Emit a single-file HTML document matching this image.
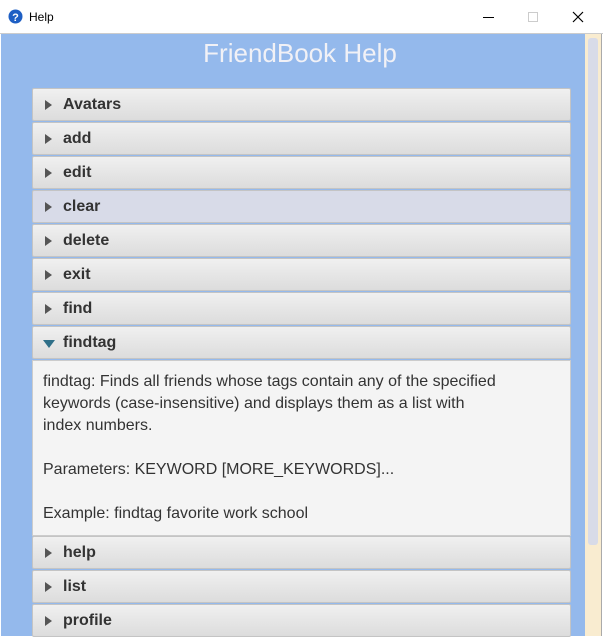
<!DOCTYPE html>
<html><head><style>
*{margin:0;padding:0;box-sizing:border-box}
body{width:603px;height:636px;overflow:hidden;background:#fff;font-family:"Liberation Sans",sans-serif;position:relative}
.tb{position:absolute;left:0;top:0;width:603px;height:34px;background:#fff;border-bottom:1px solid #ccc}
.tb .t{position:absolute;left:29px;top:10px;font-size:12px;color:#000}
.main{position:absolute;left:1px;top:34px;width:584px;height:602px;background:#94b9ec}
.sb{position:absolute;left:585px;top:34px;width:17px;height:602px;background:#f9ecd0;border-right:1px solid #aaa}
.thumb{position:absolute;left:588px;top:38px;width:10px;height:507px;background:#d8dbe8;border-radius:3px}
h1{position:absolute;left:0;width:600px;top:38px;text-align:center;font-weight:normal;font-size:26px;color:#f1f1f6}
.h{position:absolute;left:32px;width:539px;height:33px;background:linear-gradient(#f0f0f0,#dcdcdc);border:1px solid #c4c4c4;border-radius:2px;font-size:16px;font-weight:bold;color:#333;padding:7px 0 0 30px}
.h:before{content:"";position:absolute;left:12px;top:11px;border-left:7px solid #555;border-top:5px solid transparent;border-bottom:5px solid transparent}
.h.o:before{left:10px;top:13px;border-top:8px solid #2f6f88;border-left:6px solid transparent;border-right:6px solid transparent;border-bottom:0}
.c{position:absolute;left:32px;top:360px;width:539px;height:176px;background:#f4f4f4;border:1px solid #ccc;padding:10px 60px 10px 10px;font-size:16px;line-height:22px;color:#333}
</style></head><body>
<div class="tb">
<svg style="position:absolute;left:8px;top:9px" width="15" height="15"><circle cx="7.5" cy="7.5" r="7" fill="#1e5fc4"/><text x="7.5" y="12" font-size="11" font-weight="bold" fill="#fff" text-anchor="middle" font-family="Liberation Sans">?</text></svg>
<span class="t">Help</span>
<div style="position:absolute;left:483px;top:17px;width:11px;height:1px;background:#000"></div>
<div style="position:absolute;left:528px;top:12px;width:10px;height:10px;border:1px solid #ccc"></div>
<svg style="position:absolute;left:572px;top:11px" width="12" height="12"><path d="M1 1L11 11M11 1L1 11" stroke="#000" stroke-width="1.2"/></svg>
</div>
<div class="main"></div>
<div class="sb"></div><div class="thumb"></div>
<h1>FriendBook Help</h1>
<div class="h" style="top:88px">Avatars</div>
<div class="h" style="top:122px">add</div>
<div class="h" style="top:156px">edit</div>
<div class="h" style="top:190px;background:#d8dbe8">clear</div>
<div class="h" style="top:224px">delete</div>
<div class="h" style="top:258px">exit</div>
<div class="h" style="top:292px">find</div>
<div class="h o" style="top:326px">findtag</div>
<div class="c">findtag: Finds all friends whose tags contain any of the specified keywords (case-insensitive) and displays them as a list with<br>index numbers.<br><br>Parameters: KEYWORD [MORE_KEYWORDS]...<br><br>Example: findtag favorite work school</div>
<div class="h" style="top:536px">help</div>
<div class="h" style="top:570px">list</div>
<div class="h" style="top:604px">profile</div>
</body></html>
